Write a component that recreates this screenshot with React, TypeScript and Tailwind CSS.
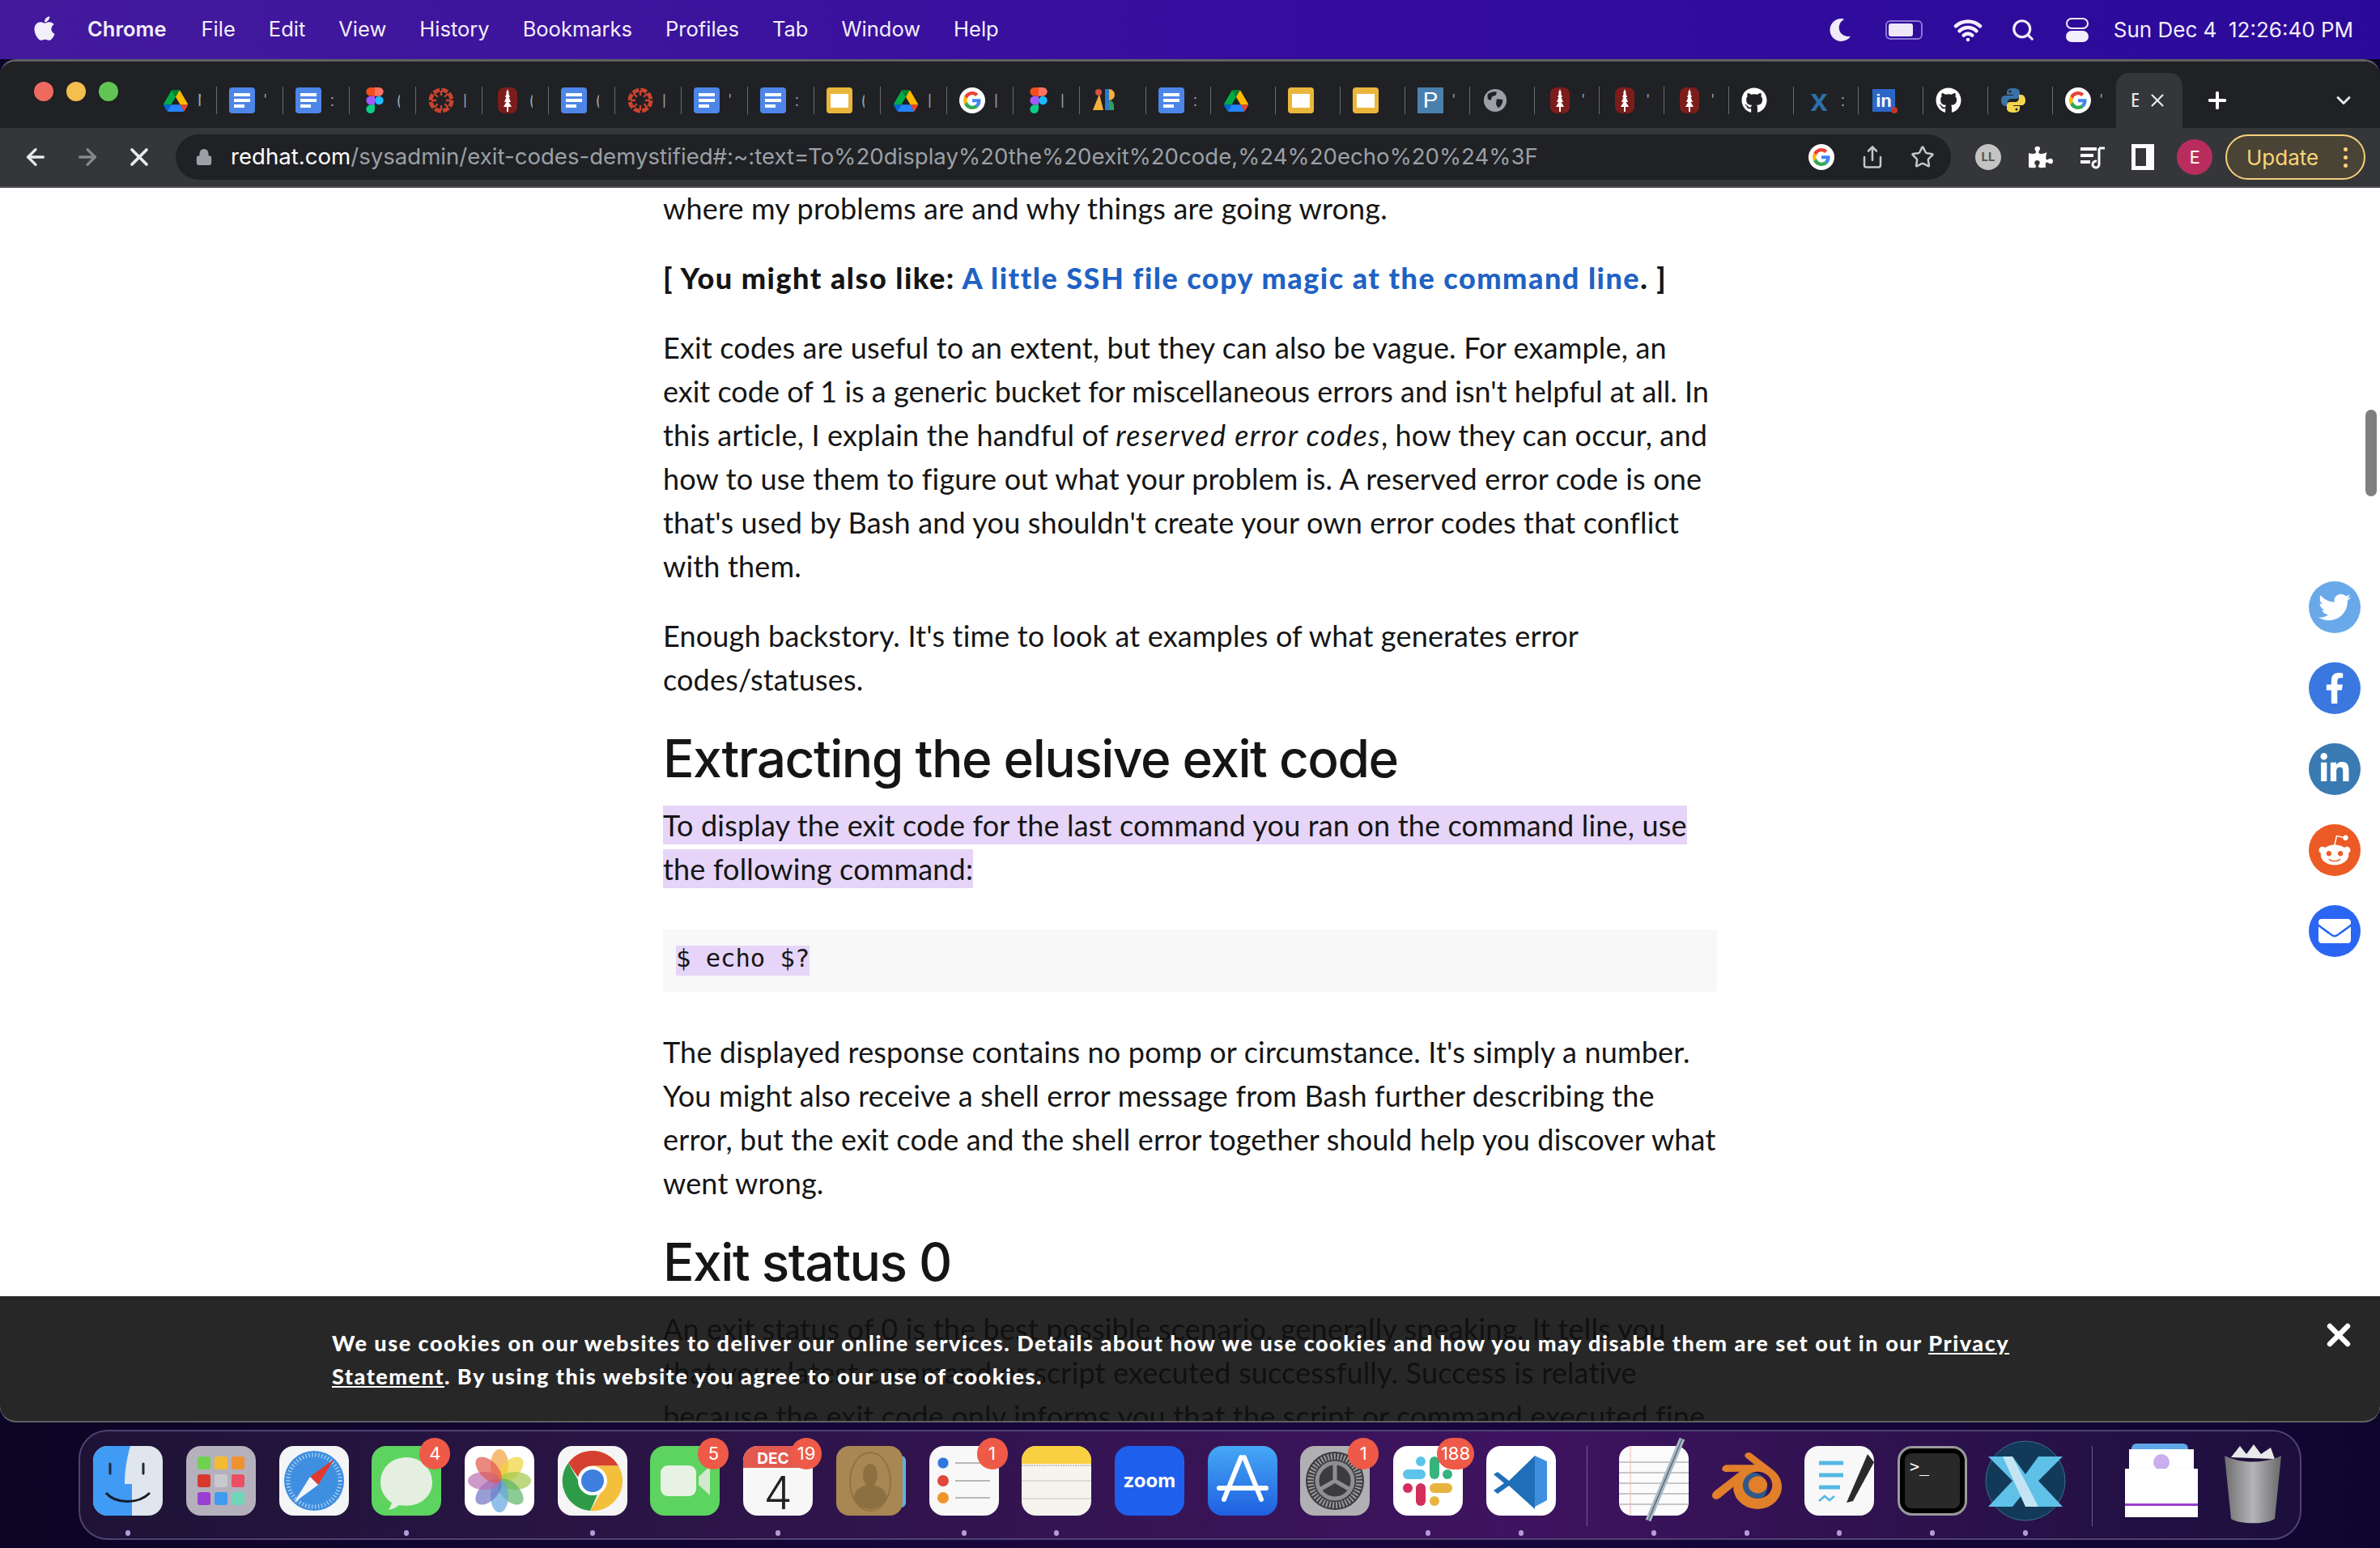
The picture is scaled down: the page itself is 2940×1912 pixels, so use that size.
import type React from "react"
import { ArrowLeft, ArrowRight, ChevronDown, Lock, Plus, Search, Share, Star, Wifi, X } from "lucide-react"
import { FaApple, FaEnvelope, FaFacebookF, FaGithub, FaLinkedinIn, FaMoon, FaPuzzlePiece, FaRedditAlien, FaTwitter } from "react-icons/fa"
import { SiBlender } from "react-icons/si"

const GoogleG = () => (
  <svg viewBox="0 0 48 48" className="w-[22px] h-[22px]">
    <path fill="#EA4335" d="M24 9.5c3.54 0 6.71 1.22 9.21 3.6l6.85-6.85C35.9 2.38 30.47 0 24 0 14.62 0 6.51 5.38 2.56 13.22l7.98 6.19C12.43 13.72 17.74 9.5 24 9.5z" />
    <path fill="#4285F4" d="M46.98 24.55c0-1.57-.15-3.09-.38-4.55H24v9.02h12.94c-.58 2.96-2.26 5.48-4.78 7.18l7.73 6c4.51-4.18 7.09-10.36 7.09-17.65z" />
    <path fill="#FBBC05" d="M10.53 28.59c-.48-1.45-.76-2.99-.76-4.59s.27-3.14.76-4.59l-7.98-6.19C.92 16.46 0 20.12 0 24c0 3.88.92 7.54 2.56 10.78l7.97-6.19z" />
    <path fill="#34A853" d="M24 48c6.48 0 11.93-2.13 15.89-5.81l-7.73-6c-2.15 1.45-4.92 2.3-8.16 2.3-6.26 0-11.57-4.22-13.47-9.91l-7.98 6.19C6.51 42.62 14.62 48 24 48z" />
  </svg>
)

const Google = () => (
  <div className="w-[32px] h-[32px] rounded-full bg-white flex items-center justify-center">
    <GoogleG />
  </div>
)

const Docs = () => (
  <div className="w-[32px] h-[32px] rounded-[4px] bg-[#4d86e8] flex flex-col justify-center gap-[3px] px-[6px]">
    <div className="h-[4px] bg-white" />
    <div className="h-[4px] bg-white" />
    <div className="h-[4px] w-[13px] bg-white" />
  </div>
)

const Slides = () => (
  <div className="w-[32px] h-[32px] rounded-[4px] bg-[#eab63c] flex items-center justify-center">
    <div className="w-[22px] h-[17px] bg-white" />
  </div>
)

const Drive = () => (
  <svg viewBox="0 0 87.3 78" className="w-[30px] h-[29px]">
    <path fill="#0066da" d="m6.6 66.85 3.85 6.65c.8 1.4 1.95 2.5 3.3 3.3l13.75-23.8h-27.5c0 1.55.4 3.1 1.2 4.5z" />
    <path fill="#00ac47" d="m43.65 25-13.75-23.8c-1.35.8-2.5 1.9-3.3 3.3l-25.4 44a9.06 9.06 0 0 0 -1.2 4.5h27.5z" />
    <path fill="#ea4335" d="m73.55 76.8c1.35-.8 2.5-1.9 3.3-3.3l1.6-2.75 7.65-13.25c.8-1.4 1.2-2.95 1.2-4.5h-27.502l5.852 11.5z" />
    <path fill="#00832d" d="m43.65 25 13.75-23.8c-1.35-.8-2.9-1.2-4.5-1.2h-18.5c-1.6 0-3.15.45-4.5 1.2z" />
    <path fill="#2684fc" d="m59.8 53h-32.3l-13.75 23.8c1.35.8 2.9 1.2 4.5 1.2h50.8c1.6 0 3.15-.45 4.5-1.2z" />
    <path fill="#ffba00" d="m73.4 26.5-12.7-22c-.8-1.4-1.95-2.5-3.3-3.3l-13.75 23.8 16.15 28h27.45c0-1.55-.4-3.1-1.2-4.5z" />
  </svg>
)

const Figma = () => (
  <svg viewBox="0 0 38 57" className="w-[22px] h-[32px]">
    <path fill="#1abcfe" d="M19 28.5a9.5 9.5 0 1 1 19 0 9.5 9.5 0 0 1-19 0z" />
    <path fill="#0acf83" d="M0 47.5A9.5 9.5 0 0 1 9.5 38H19v9.5a9.5 9.5 0 1 1-19 0z" />
    <path fill="#ff7262" d="M19 0v19h9.5a9.5 9.5 0 1 0 0-19H19z" />
    <path fill="#f24e1e" d="M0 9.5A9.5 9.5 0 0 0 9.5 19H19V0H9.5A9.5 9.5 0 0 0 0 9.5z" />
    <path fill="#a259ff" d="M0 28.5A9.5 9.5 0 0 0 9.5 38H19V19H9.5A9.5 9.5 0 0 0 0 28.5z" />
  </svg>
)

const Ring = () => (
  <svg viewBox="0 0 32 32" className="w-[32px] h-[32px]">
    <circle cx="16" cy="16" r="13" fill="none" stroke="#c9442f" strokeWidth="5" strokeDasharray="8 2.2" />
    <g stroke="#c9442f" strokeWidth="2.4">
      <path d="M16 4v24M4 16h24M7.5 7.5l17 17M24.5 7.5l-17 17" />
    </g>
    <circle cx="16" cy="16" r="6" fill="#202124" />
  </svg>
)

const Stanford = () => (
  <div className="relative w-[24px] h-[32px] rounded-[8px] bg-[#7c1d1c] flex items-center justify-center">
    <svg viewBox="0 0 12 28" className="w-[12px] h-[28px]">
      <path fill="#fff" d="M6 0 8 5 7 5 9 10 7.5 10 10 16 7.5 16 11 22 7 22 7 28 5 28 5 22 1 22 4.5 16 2 16 4.5 10 3 10 5 5 4 5z" />
    </svg>
  </div>
)

const Colored = () => (
  <svg viewBox="0 0 32 32" className="w-[32px] h-[32px]">
    <path fill="#f4b13d" d="M1 28 9 8l5 20z" />
    <path fill="#d9503f" d="M4 6a4 4 0 1 1 8 0 4 4 0 0 1-8 0z" />
    <path fill="#2b77c9" d="M16 2h5v26h-5z" />
    <path fill="#f4b13d" d="M21 2a7 7 0 0 1 0 14z" />
    <path fill="#2fa05a" d="M21 16a6 6 0 0 1 6 6v6h-6z" />
  </svg>
)

const PTile = () => (
  <div className="w-[32px] h-[32px] bg-[#4a80ae] flex items-center justify-center">
    <span className="font-['Liberation_Sans',sans-serif] text-[28px] leading-none text-white">P</span>
  </div>
)

const Globe = () => (
  <svg viewBox="0 0 32 32" className="w-[30px] h-[30px]">
    <circle cx="16" cy="16" r="15" fill="#9aa0a6" />
    <path fill="#202124" d="M6 8c4-3 9-4 12-3l-1 4-5 2-2 5-4-2zM18 14l8 1c0 5-2 9-6 11l-3-5z" />
  </svg>
)

const GitHub = () => <FaGithub className="text-white" size={32} />

const Xing = () => <span className="font-['Liberation_Sans',sans-serif] font-bold text-[38px] leading-none text-[#2f6fa8]">x</span>

const LinkedIn = () => (
  <div className="relative w-[28px] h-[28px] bg-[#2c67c8] flex items-end justify-center">
    <span className="font-['Liberation_Sans',sans-serif] font-bold text-[22px] leading-[26px] text-white">in</span>
    <div className="absolute -bottom-[2px] -right-[3px] w-[8px] h-[8px] rounded-full bg-[#c5352b]" />
  </div>
)

const Python = () => (
  <svg viewBox="0 0 32 32" className="w-[32px] h-[32px]">
    <path fill="#3a72a5" d="M16 1c-6 0-8 2-8 5v3h8v1H6c-3 0-5 2-5 6s2 7 5 7h3v-4c0-3 2-5 5-5h6c2 0 4-2 4-4V6c0-3-3-5-8-5zm-4 2.500a1.500 1.500 0 1 1 0 3 1.500 1.500 0 0 1 0-3z" />
    <path fill="#f5d550" d="M16 31c6 0 8-2 8-5v-3h-8v-1h10c3 0 5-2 5-6s-2-7-5-7h-3v4c0 3-2 5-5 5h-6c-2 0-4 2-4 4v4c0 3 3 5 8 5zm4-2.500a1.500 1.500 0 1 1 0-3 1.500 1.500 0 0 1 0 3z" />
  </svg>
)

type TabDef = { icon: React.ReactNode; title: string }

const tabsWide: TabDef[] = [
  { icon: <Drive />, title: "My Drive" },
  { icon: <Docs />, title: "'Exit codes" },
  { icon: <Docs />, title: ": notes" },
  { icon: <Figma />, title: "( Figma" },
  { icon: <Ring />, title: "| Ring" },
  { icon: <Stanford />, title: "( Stanford" },
  { icon: <Docs />, title: "( Doc" },
  { icon: <Ring />, title: "| Ring" },
  { icon: <Docs />, title: "' Doc" },
  { icon: <Docs />, title: ": Doc" },
  { icon: <Slides />, title: "( Slides" },
  { icon: <Drive />, title: "| Drive" },
  { icon: <Google />, title: "| Google" },
  { icon: <Figma />, title: "| Figma" },
  { icon: <Colored />, title: "" },
]

const tabsNarrow: TabDef[] = [
  { icon: <Docs />, title: ": Doc" },
  { icon: <Drive />, title: "" },
  { icon: <Slides />, title: "" },
  { icon: <Slides />, title: "" },
  { icon: <PTile />, title: "' Pay" },
  { icon: <Globe />, title: "" },
  { icon: <Stanford />, title: "' Stanford" },
  { icon: <Stanford />, title: "' Stanford" },
  { icon: <Stanford />, title: "' Stanford" },
  { icon: <GitHub />, title: "" },
  { icon: <Xing />, title: ": X" },
  { icon: <LinkedIn />, title: "" },
  { icon: <GitHub />, title: "" },
  { icon: <Python />, title: "" },
  { icon: <Google />, title: "' Google" },
]

const Tab = ({ tab, wide, last }: { tab: TabDef; wide: boolean; last?: boolean }) => (
  <div className={`h-[68px] flex items-center shrink-0 ${wide ? "w-[82px]" : "w-[80px]"}`}>
    <div className="ml-[13px] w-[36px] flex items-center justify-center shrink-0">{tab.icon}</div>
    <div className="ml-[9px] w-[4px] h-[24px] overflow-hidden whitespace-nowrap text-[20px] leading-[24px] text-[#9aa0a6] font-['Roboto',sans-serif]">{tab.title}</div>
    {!last && <div className="ml-auto w-[1px] h-[34px] bg-[#6a6b6e]" />}
  </div>
)

const Finder = () => (
  <svg viewBox="0 0 86 86" className="w-full h-full">
    <rect width="86" height="86" rx="18" fill="#dfe6ee" />
    <path fill="#3f9bf4" d="M18 0h28c-5 17-7 33-7 47h9v39H18A18 18 0 0 1 0 68V18A18 18 0 0 1 18 0z" />
    <path d="M21 22v12M62 22v12" stroke="#1c2a3a" strokeWidth="3" strokeLinecap="round" />
    <path d="M16 58c12 14 40 14 54 0" stroke="#151d28" strokeWidth="3" fill="none" />
  </svg>
)

const Launchpad = () => (
  <div className="w-full h-full rounded-[18px] bg-[#b4b1bd] grid grid-cols-3 gap-x-[5px] gap-y-[6px] px-[14px] py-[13px]">
    {["bg-[#6fd14f]", "bg-[#f3bb30]", "bg-[#ee9230]", "bg-[#d63a2d]", "bg-[#c8c9cc]", "bg-[#ec4f64]", "bg-[#9a3fd0]", "bg-[#3f9af0]", "bg-[#6fd6b8]"].map((c) => (
      <div key={c} className={`rounded-[3px] ${c}`} />
    ))}
  </div>
)

const Safari = () => (
  <svg viewBox="0 0 86 86" className="w-full h-full">
    <rect width="86" height="86" rx="18" fill="#f4f5f6" />
    <circle cx="43" cy="43" r="37" fill="#3f8fe0" />
    <circle cx="43" cy="43" r="32" fill="none" stroke="#cfe4f8" strokeWidth="5" strokeDasharray="1 3" />
    <path fill="#e0392f" d="M68 16 38 38l10 10z" />
    <path fill="#f4f5f6" d="M18 70 48 48 38 38z" />
  </svg>
)

const Messages = () => (
  <svg viewBox="0 0 86 86" className="w-full h-full">
    <rect width="86" height="86" rx="18" fill="#5dd45f" />
    <path fill="#e4efe2" d="M43 14c-19 0-32 14-32 31 0 11 6 20 14 25-1 4-3 7-4 9 5-1 10-3 13-6 3 .5 6 .8 9 .8 19 0 32-13 32-29S62 14 43 14z" />
  </svg>
)

const Photos = () => (
  <svg viewBox="0 0 86 86" className="w-full h-full">
    <rect width="86" height="86" rx="18" fill="#fff" />
    {[
      ["#f3a13c", 0],
      ["#f0d43a", 45],
      ["#a3c84a", 90],
      ["#5cb56a", 135],
      ["#63a6de", 180],
      ["#6f74c2", 225],
      ["#b86fb3", 270],
      ["#e0574d", 315],
    ].map(([c, r]) => (
      <ellipse key={String(r)} cx="43" cy="24" rx="11" ry="20" fill={String(c)} opacity="0.7" transform={`rotate(${r} 43 43)`} />
    ))}
  </svg>
)

const ChromeIcon = () => (
  <svg viewBox="0 0 86 86" className="w-full h-full">
    <rect width="86" height="86" rx="18" fill="#f5f5f5" />
    <path fill="#d6402f" d="M43 6a37 37 0 0 1 32 18.500H43a18.500 18.500 0 0 0-18 14L13 21A37 37 0 0 1 43 6z" />
    <path fill="#2e9b48" d="M13 21l16 28a18.500 18.500 0 0 0 20 11L40 80A37 37 0 0 1 13 21z" />
    <path fill="#f4bf3a" d="M75 24.500A37 37 0 0 1 40 80l16-27a18.500 18.500 0 0 0-13-28.500z" />
    <circle cx="43" cy="43" r="18" fill="#fff" />
    <circle cx="43" cy="43" r="14" fill="#3f7fe0" />
  </svg>
)

const FaceTime = () => (
  <svg viewBox="0 0 86 86" className="w-full h-full">
    <rect width="86" height="86" rx="18" fill="#5dd45f" />
    <rect x="13" y="24" width="44" height="38" rx="9" fill="#e8f2e4" />
    <path fill="#d2e8cc" d="M60 38l14-13v36L60 48z" />
  </svg>
)

const Calendar = () => (
  <svg viewBox="0 0 86 86" className="w-full h-full">
    <rect width="86" height="86" rx="18" fill="#f7f7f7" />
    <path fill="#e25a4f" d="M18 0h50a18 18 0 0 1 18 18v9H0v-9A18 18 0 0 1 18 0z" />
    <text x="37" y="22" textAnchor="middle" fontSize="19" fontWeight="700" fill="#fff" fontFamily="Inter, sans-serif">DEC</text>
    <text x="43" y="78" textAnchor="middle" fontSize="56" fontWeight="300" fill="#222" fontFamily="Inter, sans-serif">4</text>
  </svg>
)

const Contacts = () => (
  <svg viewBox="0 0 86 86" className="w-full h-full">
    <rect x="70" y="12" width="16" height="64" rx="6" fill="#5fb0e0" />
    <rect width="82" height="86" rx="16" fill="#a98752" />
    <ellipse cx="42" cy="44" rx="25" ry="36" fill="none" stroke="#917343" strokeWidth="2" />
    <ellipse cx="42" cy="36" rx="9" ry="14" fill="#8d7041" />
    <ellipse cx="42" cy="63" rx="20" ry="15" fill="#8d7041" />
  </svg>
)

const Reminders = () => (
  <svg viewBox="0 0 86 86" className="w-full h-full">
    <rect width="86" height="86" rx="18" fill="#f8f8f8" />
    <circle cx="17" cy="21" r="7" fill="#2f76e0" stroke="#dbe7f7" strokeWidth="1" />
    <circle cx="17" cy="43" r="7" fill="#e1463a" />
    <circle cx="17" cy="64" r="7" fill="#ee952e" />
    <path d="M32 21h43M32 43h43M32 64h43" stroke="#b8b8b8" strokeWidth="2" />
  </svg>
)

const Notes = () => (
  <svg viewBox="0 0 86 86" className="w-full h-full">
    <rect width="86" height="86" rx="18" fill="#f6f4ee" />
    <path fill="#f9d040" d="M18 0h50a18 18 0 0 1 18 18v4H0v-4A18 18 0 0 1 18 0z" />
    <path d="M0 24h86" stroke="#c8c6bd" strokeWidth="2" strokeDasharray="2 1" />
    <path d="M0 43h86M0 65h86" stroke="#d6d4cd" strokeWidth="1.500" />
  </svg>
)

const AppStore = () => (
  <svg viewBox="0 0 86 86" className="w-full h-full">
    <defs>
      <linearGradient id="appstore" x1="0" y1="0" x2="0" y2="1">
        <stop offset="0" stopColor="#45a8f5" />
        <stop offset="1" stopColor="#1f5fe0" />
      </linearGradient>
    </defs>
    <rect width="86" height="86" rx="18" fill="url(#appstore)" />
    <path d="M41 14 20 66M45 14 66 66M14 52h58" stroke="#fff" strokeWidth="6" strokeLinecap="round" />
  </svg>
)

const Settings = () => (
  <svg viewBox="0 0 86 86" className="w-full h-full">
    <rect width="86" height="86" rx="18" fill="#b0b0b2" />
    <circle cx="43" cy="43" r="36" fill="#3c3c3e" />
    <circle cx="43" cy="43" r="30" fill="none" stroke="#9a9a9c" strokeWidth="8" strokeDasharray="2 2" />
    <circle cx="43" cy="43" r="22" fill="none" stroke="#8f8f91" strokeWidth="5" />
    <path d="M43 43V21M43 43 24 54M43 43l19 11" stroke="#8f8f91" strokeWidth="5" />
  </svg>
)

const Slack = () => (
  <svg viewBox="0 0 86 86" className="w-full h-full">
    <rect width="86" height="86" rx="18" fill="#fff" />
    <rect x="12" y="29" width="28" height="12" rx="6" fill="#5cc4ea" />
    <rect x="28" y="13" width="12" height="12" rx="6" fill="#5cc4ea" />
    <rect x="45" y="13" width="12" height="28" rx="6" fill="#37b37e" />
    <rect x="61" y="29" width="12" height="12" rx="6" fill="#37b37e" />
    <rect x="45" y="46" width="28" height="12" rx="6" fill="#e9b33f" />
    <rect x="45" y="62" width="12" height="12" rx="6" fill="#e9b33f" />
    <rect x="28" y="46" width="12" height="28" rx="6" fill="#d32f5a" />
    <rect x="12" y="46" width="12" height="12" rx="6" fill="#d32f5a" />
  </svg>
)

const VsCode = () => (
  <svg viewBox="0 0 86 86" className="w-full h-full">
    <rect width="86" height="86" rx="18" fill="#fff" />
    <path fill="#1f6fb8" d="M60 12 28 43 14 32l-5 3 13 11-13 9 5 4 14-10 32 29z" />
    <path fill="#3d90de" d="M60 12l15 7v48l-15 8z" />
  </svg>
)

const TextEdit = () => (
  <svg viewBox="0 0 86 86" className="w-full h-full overflow-visible">
    <rect width="86" height="86" rx="16" fill="#fbfbfb" />
    <path d="M0 20h86M0 33h86M0 46h86M0 59h86M0 72h86" stroke="#c9c6c6" strokeWidth="2" />
    <path d="M14 0v86" stroke="#eeb9b0" strokeWidth="1" />
    <path d="M78-9 36 92" stroke="#a9b9c7" strokeWidth="7" />
    <path d="M78-9 36 92" stroke="#5a6a78" strokeWidth="1.500" />
  </svg>
)

const BlenderIcon = () => (
  <div className="relative w-full h-full flex items-center justify-center">
    <div className="absolute left-[32px] top-[33px] w-[36px] h-[36px] rounded-full bg-[#30598a]" />
    <SiBlender className="relative text-[#e17f2a]" size={100} />
  </div>
)

const ScriptEditor = () => (
  <svg viewBox="0 0 86 86" className="w-full h-full">
    <rect width="86" height="86" rx="18" fill="#f8f8f8" />
    <path d="M18 21h30M18 36h30M18 51h26" stroke="#55b8e4" strokeWidth="5" />
    <path d="M18 68l7-6 6 5 6-5" stroke="#55b8e4" strokeWidth="2.500" fill="none" />
    <path fill="#2a2a2a" d="M78 10 86 20 60 68 52 70z" />
  </svg>
)

const Terminal = () => (
  <div className="w-full h-full rounded-[18px] border-[3px] border-[#9a9a9a] bg-black p-[6px]">
    <div className="w-full h-full rounded-[8px] bg-[#292929] pl-[6px] pt-[4px] font-['DejaVu_Sans_Mono',monospace] text-[20px] leading-[24px] text-white">&gt;_</div>
  </div>
)

const XApp = () => (
  <svg viewBox="0 0 100 100" className="w-[100px] h-[100px] -mt-[7px] -ml-[7px]">
    <circle cx="50" cy="50" r="49" fill="#123a58" stroke="#3a6f92" strokeWidth="1" />
    <path fill="#5fc0e8" d="M4 20h30l16 22 16-22h30L66 50l30 32H66L50 62 34 82H4l30-32z" />
    <path fill="#c3e4f4" d="M22 20h12l32 62H50z" />
  </svg>
)

const Downloads = () => (
  <div className="relative w-full h-full">
    <div className="absolute left-[8px] top-[-3px] w-[70px] h-[16px] rounded-t-[6px] bg-[#5fa8e8]" />
    <div className="absolute left-[5px] top-[4px] w-[80px] h-[60px] bg-white flex justify-center pt-[6px]">
      <div className="w-[20px] h-[20px] rounded-full bg-[#c9aef0]" />
    </div>
    <div className="absolute left-0 top-[28px] w-[90px] h-[60px] bg-white shadow-sm flex items-end">
      <div className="w-full h-[3px] mb-[14px] bg-[#9a3fd0]" />
    </div>
  </div>
)

const Trash = () => (
  <svg viewBox="0 0 86 100" className="w-[86px] h-[100px] -mt-[4px]">
    <defs>
      <linearGradient id="trash" x1="0" y1="0" x2="1" y2="0">
        <stop offset="0" stopColor="#6e6e70" />
        <stop offset="0.5" stopColor="#b5b5b7" />
        <stop offset="1" stopColor="#69696b" />
      </linearGradient>
    </defs>
    <path fill="#e9e9e9" d="M16 18 27 4l8 10 9-12 9 12 12-8 5 14z" />
    <path fill="url(#trash)" d="M8 16c20 10 50 10 70 0l-8 78c-10 7-44 7-54 0z" />
  </svg>
)

const Badge = ({ text, wide }: { text: string; wide?: boolean }) => (
  <div className={`absolute top-[-10px] h-[39px] rounded-full bg-[#ee5a47] flex items-center justify-center text-white text-[22px] font-['Inter',sans-serif] ${wide ? "-right-[14px] w-[46px]" : "-right-[11px] w-[38px]"}`}>
    {text}
  </div>
)

const DockItem = ({ children, dot, badge }: { children: React.ReactNode; dot?: boolean; badge?: React.ReactNode }) => (
  <div className="w-[114.7px] shrink-0 flex flex-col items-center">
    <div className="relative w-[86px] h-[86px]">
      {children}
      {badge}
    </div>
    <div className={`mt-[18px] w-[6px] h-[7px] rounded-full ${dot ? "bg-[#b59ad8]" : ""}`} />
  </div>
)

const socials = [
  { bg: "bg-[#6aa9e9]", icon: <FaTwitter size={40} /> },
  { bg: "bg-[#3a78e0]", icon: <FaFacebookF size={38} /> },
  { bg: "bg-[#3a7ab2]", icon: <FaLinkedinIn size={40} /> },
  { bg: "bg-[#ec5a26]", icon: <FaRedditAlien size={42} /> },
  { bg: "bg-[#2b66f2]", icon: <FaEnvelope size={40} /> },
]

const menus = ["File", "Edit", "View", "History", "Bookmarks", "Profiles", "Tab", "Window", "Help"]

const App = () => {
  return (
    <div className="w-[2940px] h-[1912px] flex flex-col overflow-hidden bg-[#0d0528] font-['Inter',sans-serif]">
      {/* menu bar */}
      <div className="h-[73px] shrink-0 flex items-center justify-between pl-[38px] pr-[33px] text-[#f3eefc] text-[25.5px] bg-gradient-to-r from-[#431a9c] via-[#360d9e] to-[#2b0a9a]">
        <div className="flex items-center">
          <FaApple size={34} className="mr-[36px] text-[#f3eefc] -mt-[4px]" />
          <span className="font-semibold mr-[43px]">Chrome</span>
          <div className="flex items-center gap-[41px]">
            {menus.map((m) => (
              <span key={m}>{m}</span>
            ))}
          </div>
        </div>
        <div className="flex items-center">
          <FaMoon size={28} className="text-[#f0eafa]" />
          <div className="ml-[42px] w-[46px] h-[24px] rounded-[6px] border-2 border-[#8a78d8] p-[2px] flex">
            <div className="w-[30px] bg-[#eee8fa] rounded-[3px]" />
          </div>
          <Wifi size={36} strokeWidth={3} className="ml-[38px] text-[#f3eefc]" />
          <Search size={30} strokeWidth={2.5} className="ml-[35px] text-[#f3eefc]" />
          <div className="ml-[38px] w-[28px] flex flex-col gap-[2px]">
            <div className="h-[14px] rounded-full border-2 border-[#f3eefc]" />
            <div className="h-[14px] rounded-full bg-[#f3eefc]" />
          </div>
          <span className="ml-[31px] whitespace-pre text-[26px]">Sun Dec 4  12:26:40 PM</span>
        </div>
      </div>

      {/* chrome window */}
      <div className="h-[1684px] shrink-0 flex flex-col rounded-[20px] overflow-hidden border-t-[3px] border-b-[2px] border-[#5f6063] relative">
        {/* tab strip */}
        <div className="h-[82px] shrink-0 bg-[#202124] flex">
          <div className="w-[186px] shrink-0 flex items-center gap-[16px] pl-[42px] pb-[8px]">
            <div className="w-[24px] h-[24px] rounded-full bg-[#ee6a5f]" />
            <div className="w-[24px] h-[24px] rounded-full bg-[#f4bf4f]" />
            <div className="w-[24px] h-[24px] rounded-full bg-[#61c554]" />
          </div>
          <div className="flex items-end">
            {tabsWide.map((t, i) => (
              <Tab key={i} tab={t} wide />
            ))}
            {tabsNarrow.map((t, i) => (
              <Tab key={i} tab={t} wide={false} last={i === tabsNarrow.length - 1} />
            ))}
            <div className="w-[82px] h-[68px] -ml-[2px] shrink-0 rounded-t-[16px] bg-[#35363a] flex items-center pl-[18px]">
              <span className="w-[10px] overflow-hidden text-[#e8eaed] text-[24px] font-['Roboto',sans-serif]">E</span>
              <X size={26} className="ml-[10px] text-[#e8eaed]" />
            </div>
            <Plus size={32} strokeWidth={3} className="ml-[27px] mb-[18px] text-white" />
            <ChevronDown size={28} strokeWidth={2.5} className="ml-[126px] mb-[20px] text-[#e8eaed]" />
          </div>
        </div>

        {/* toolbar */}
        <div className="h-[74px] shrink-0 bg-[#35363a] border-b-2 border-[#4d4e51] flex items-center relative">
          <ArrowLeft size={32} strokeWidth={2.5} className="ml-[28px] text-[#e8eaed]" />
          <ArrowRight size={32} strokeWidth={2.5} className="ml-[32px] text-[#85878b]" />
          <X size={36} strokeWidth={2.5} className="ml-[30px] text-[#e8eaed]" />
          <div className="ml-[27px] w-[2193px] h-[56px] rounded-full bg-[#202124] flex items-center pl-[24px]">
            <Lock size={22} fill="#9aa0a6" className="text-[#9aa0a6]" />
            <div className="ml-[22px] text-[27.6px] whitespace-nowrap">
              <span className="text-white">redhat.com</span>
              <span className="text-[#9aa0a6]">/sysadmin/exit-codes-demystified#:~:text=To%20display%20the%20exit%20code,%24%20echo%20%24%3F</span>
            </div>
            <div className="ml-auto flex items-center gap-[32px] pr-[20px]">
              <Google />
              <Share size={30} strokeWidth={2} className="text-[#c4c7c5]" />
              <Star size={30} strokeWidth={2} className="text-[#c4c7c5]" />
            </div>
          </div>
          <div className="ml-[30px] w-[32px] h-[32px] rounded-full bg-[#c4c4c4] flex items-center justify-center text-[15px] font-bold text-[#555]">LL</div>
          <FaPuzzlePiece size={30} className="ml-[34px] text-white" />
          <svg viewBox="0 0 32 32" className="ml-[33px] w-[32px] h-[32px] text-white">
            <path d="M1 6h20M1 14h16M1 22h12" stroke="currentColor" strokeWidth="4" />
            <path d="M24 5v20a4 4 0 1 1-3-3.800M24 5h7" stroke="currentColor" strokeWidth="3" fill="none" />
          </svg>
          <div className="ml-[32px] w-[28px] h-[32px] border-[5px] border-white border-r-[10px]" />
          <div className="ml-[28px] w-[44px] h-[44px] rounded-full bg-[#b92d5d] flex items-center justify-center text-white text-[22px] font-['Roboto',sans-serif]">E</div>
          <div className="ml-[16px] w-[173px] h-[56px] rounded-full border-2 border-[#f6d27a] bg-[#4a4436] flex items-center justify-between pl-[24px] pr-[20px]">
            <span className="text-[#fbd575] text-[26px]">Update</span>
            <div className="flex flex-col gap-[5px]">
              <div className="w-[5px] h-[5px] rounded-full bg-[#fbd575]" />
              <div className="w-[5px] h-[5px] rounded-full bg-[#fbd575]" />
              <div className="w-[5px] h-[5px] rounded-full bg-[#fbd575]" />
            </div>
          </div>
        </div>

        {/* page */}
        <div className="relative flex-1 overflow-hidden bg-white text-[#151515]">
          <article className="-mt-[2px] ml-[819px] w-[1302px] font-['Lato',sans-serif] text-[36px] leading-[54px] tracking-[0.17px]">
            <p className="mb-8">where my problems are and why things are going wrong.</p>
            <p className="mb-8 font-black whitespace-nowrap tracking-[1.5px]">
              [ You might also like: <span className="text-[#1f62c4]">A little SSH file copy magic at the command line</span>. ]
            </p>
            <p className="mb-8 whitespace-nowrap">
              Exit codes are useful to an extent, but they can also be vague. For example, an
              <br />
              <span className="tracking-normal">exit code of 1 is a generic bucket for miscellaneous errors and isn't helpful at all. In</span>
              <br />
              this article, I explain the handful of <em className="tracking-[1.4px]">reserved error codes</em>, how they can occur, and
              <br />
              how to use them to figure out what your problem is. A reserved error code is one
              <br />
              that's used by Bash and you shouldn't create your own error codes that conflict
              <br />
              with them.
            </p>
            <p className="mb-8 whitespace-nowrap">
              Enough backstory. It's time to look at examples of what generates error
              <br />
              codes/statuses.
            </p>
            <h2 className="mb-6 pt-[8px] text-[64px] leading-[62px] font-medium font-['Inter',sans-serif] tracking-[-1.500px]">Extracting the elusive exit code</h2>
            <div className="whitespace-nowrap">
              <div className="py-[3px]">
                <div className="w-fit h-[48px] leading-[48px] bg-[#e6d5f8]">To display the exit code for the last command you ran on the command line, use</div>
              </div>
              <div className="py-[3px]">
                <div className="w-fit h-[48px] leading-[48px] bg-[#e6d5f8]">the following command:</div>
              </div>
            </div>
            <pre className="mt-[48px] mb-[47px] h-[77px] bg-[#f8f8f8] pl-[16px] pt-[20px] font-['DejaVu_Sans_Mono',monospace] text-[30.5px] leading-[32px] tracking-normal">
              <span className="inline-block h-[37px] bg-[#e6d5f8]">$ echo $?</span>
            </pre>
            <p className="mb-8 whitespace-nowrap">
              The displayed response contains no pomp or circumstance. It's simply a number.
              <br />
              You might also receive a shell error message from Bash further describing the
              <br />
              error, but the exit code and the shell error together should help you discover what
              <br />
              went wrong.
            </p>
            <h2 className="mb-6 pt-[8px] text-[64px] leading-[62px] font-medium font-['Inter',sans-serif] tracking-[-1.500px]">Exit status 0</h2>
            <p className="whitespace-nowrap">
              An exit status of 0 is the best possible scenario, generally speaking. It tells you
              <br />
              that your latest command or script executed successfully. Success is relative
              <br />
              because the exit code only informs you that the script or command executed fine
            </p>
          </article>

          {/* scrollbar */}
          <div className="absolute right-[4px] top-[274px] w-[14px] h-[107px] rounded-full bg-[#7f7f7f]" />

          {/* share buttons */}
          <div className="absolute left-[2852px] top-[486px] flex flex-col gap-[36px]">
            {socials.map((s, i) => (
              <div key={i} className={`w-[64px] h-[64px] rounded-full flex items-center justify-center text-white ${s.bg}`}>
                {s.icon}
              </div>
            ))}
          </div>

          {/* cookie notice */}
          <div className="absolute left-0 right-0 bottom-0 h-[154px] bg-[#0f0f0f]/90 pt-[37px] pl-[410px] text-white font-['Lato',sans-serif] font-black text-[27px] leading-[41px] tracking-[1.53px]">
            <div className="whitespace-nowrap">
              We use cookies on our websites to deliver our online services. Details about how we use cookies and how you may disable them are set out in our <span className="underline">Privacy</span>
              <br />
              <span className="underline">Statement</span>. By using this website you agree to our use of cookies.
            </div>
            <X size={44} strokeWidth={3.5} className="absolute left-[2867px] top-[26px] text-white" />
          </div>
        </div>
      </div>

      {/* dock */}
      <div className="flex-1 pt-[9px] px-[97px] bg-gradient-to-r from-[#0c0524] via-[#1a0640] to-[#0f0630]">
        <div className="h-[136px] rounded-[36px] border-2 border-[#4f4272] pt-[18px] pl-[2px] flex bg-gradient-to-r from-[#1e1336] via-[#3f1360] via-65% to-[#1c0f3c]">
          <DockItem dot><Finder /></DockItem>
          <DockItem><Launchpad /></DockItem>
          <DockItem><Safari /></DockItem>
          <DockItem dot badge={<Badge text="4" />}><Messages /></DockItem>
          <DockItem><Photos /></DockItem>
          <DockItem dot><ChromeIcon /></DockItem>
          <DockItem badge={<Badge text="5" />}><FaceTime /></DockItem>
          <DockItem dot badge={<Badge text="19" />}><Calendar /></DockItem>
          <DockItem><Contacts /></DockItem>
          <DockItem dot badge={<Badge text="1" />}><Reminders /></DockItem>
          <DockItem dot><Notes /></DockItem>
          <DockItem>
            <div className="w-full h-full rounded-[18px] bg-[#1f5fee] flex items-center justify-center text-white font-bold text-[24px]">zoom</div>
          </DockItem>
          <DockItem><AppStore /></DockItem>
          <DockItem badge={<Badge text="1" />}><Settings /></DockItem>
          <DockItem dot badge={<Badge text="188" wide />}><Slack /></DockItem>
          <DockItem dot><VsCode /></DockItem>
          <div className="w-[49.500px] h-[99px] shrink-0 flex justify-center">
            <div className="w-[1px] bg-[#6f5a90]" />
          </div>
          <DockItem dot><TextEdit /></DockItem>
          <DockItem dot><BlenderIcon /></DockItem>
          <DockItem dot><ScriptEditor /></DockItem>
          <DockItem dot><Terminal /></DockItem>
          <DockItem dot><XApp /></DockItem>
          <div className="w-[52px] h-[99px] shrink-0 flex justify-center">
            <div className="w-[1px] bg-[#6f5a90]" />
          </div>
          <DockItem><Downloads /></DockItem>
          <DockItem><Trash /></DockItem>
        </div>
      </div>
    </div>
  )
}

export default App
